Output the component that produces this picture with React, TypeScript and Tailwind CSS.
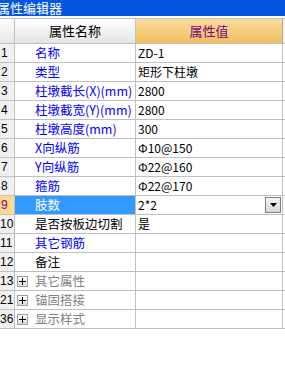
type Tone = "blue" | "black" | "gray";

interface PropRow {
  no: string;
  name: string;
  value: string;
  tone: Tone;
  group?: boolean;
  selected?: boolean;
}

const ROWS: PropRow[] = [
  { no: "1", name: "名称", value: "ZD-1", tone: "blue" },
  { no: "2", name: "类型", value: "矩形下柱墩", tone: "blue" },
  { no: "3", name: "柱墩截长(X)(mm)", value: "2800", tone: "blue" },
  { no: "4", name: "柱墩截宽(Y)(mm)", value: "2800", tone: "blue" },
  { no: "5", name: "柱墩高度(mm)", value: "300", tone: "blue" },
  { no: "6", name: "X向纵筋", value: "Φ10@150", tone: "blue" },
  { no: "7", name: "Y向纵筋", value: "Φ22@160", tone: "blue" },
  { no: "8", name: "箍筋", value: "Φ22@170", tone: "blue" },
  { no: "9", name: "肢数", value: "2*2", tone: "blue", selected: true },
  { no: "10", name: "是否按板边切割", value: "是", tone: "black" },
  { no: "11", name: "其它钢筋", value: "", tone: "blue" },
  { no: "12", name: "备注", value: "", tone: "black" },
  { no: "13", name: "其它属性", value: "", tone: "gray", group: true },
  { no: "21", name: "锚固搭接", value: "", tone: "gray", group: true },
  { no: "36", name: "显示样式", value: "", tone: "gray", group: true },
];

const TONE_STYLES: Record<Tone, string> = {
  blue: "text-[#0000ff]",
  black: "text-black",
  gray: "text-[#808080]",
};

const FONT = "font-['Noto_Sans_CJK_SC','Liberation_Sans',sans-serif]";

function PlusBox() {
  return (
    <span className="mr-[7px] flex h-[11px] w-[11px] shrink-0 items-center justify-center border border-[#a0a0a0] bg-gradient-to-b from-white to-[#dcdcdc]">
      <svg width="7" height="7" viewBox="0 0 7 7" aria-hidden="true">
        <path d="M0 3.5h7M3.5 0v7" stroke="#000" strokeWidth="1" />
      </svg>
    </span>
  );
}

function DropButton() {
  return (
    <span className="ml-auto mr-[1px] flex h-[16px] w-[16px] items-center justify-center border border-[#808080] bg-gradient-to-b from-[#f4f4f4] to-[#d8d8d8]">
      <svg width="7" height="4" viewBox="0 0 7 4" aria-hidden="true">
        <path d="M0 0h7L3.5 4z" fill="#000" />
      </svg>
    </span>
  );
}

function Row({ row }: { row: PropRow }) {
  return (
    <div className="flex h-[19px] border-b border-[#c0c0c0]">
      <div
        className={`w-[15px] shrink-0 overflow-hidden whitespace-nowrap border-r border-[#c0c0c0] pl-[1px] font-['Liberation_Sans',sans-serif] text-[12px] leading-[18px] ${row.selected ? "bg-[#ffd98c] text-[#800080]" : "bg-[#f0f0f0] text-black"} ${row.no.length > 1 ? "-indent-[1px]" : ""}`}
      >
        {row.no}
      </div>
      <div
        className={`flex w-[121px] shrink-0 items-center border-r border-[#c0c0c0] text-[12.5px] ${row.selected ? "bg-[#3399ff] text-white" : TONE_STYLES[row.tone]} ${row.group ? "pl-[2px]" : "pl-[20px]"}`}
      >
        {row.group && <PlusBox />}
        <span className="whitespace-nowrap leading-[18px]">{row.name}</span>
      </div>
      <div className="flex w-[147px] shrink-0 items-center border-r border-[#c0c0c0] pl-[2px] text-[12px] text-black">
        <span className="whitespace-nowrap leading-[18px]">{row.value}</span>
        {row.selected && <DropButton />}
      </div>
    </div>
  );
}

export default function App() {
  return (
    <div className={`h-[384px] w-[285px] overflow-hidden bg-white ${FONT}`}>
      {/* Title bar */}
      <div className="h-[16px] overflow-hidden bg-[#0556de] text-[13px] leading-[15px] text-white">
        <span className="-ml-[3px] whitespace-nowrap">属性编辑器</span>
      </div>
      <div className="h-[2px] bg-white" />

      {/* Header */}
      <div className="flex h-[26px] border-y border-[#c0c0c0] bg-[#f4f4f4]">
        <div className="w-[15px] shrink-0 border-r border-[#c0c0c0] bg-gradient-to-b from-white to-[#e6e6e6]" />
        <div className="flex w-[121px] shrink-0 items-center justify-center border-r border-[#c0c0c0] bg-gradient-to-b from-white to-[#e4e4e4] text-[13px] text-black">
          属性名称
        </div>
        <div className="flex w-[147px] shrink-0 items-center justify-center border-r border-[#a8a8a8] bg-gradient-to-b from-[#fbdc9e] to-[#f0bf5c] text-[13px] text-[#800080]">
          属性值
        </div>
      </div>

      {ROWS.map((row) => (
        <Row key={row.no} row={row} />
      ))}
    </div>
  );
}
